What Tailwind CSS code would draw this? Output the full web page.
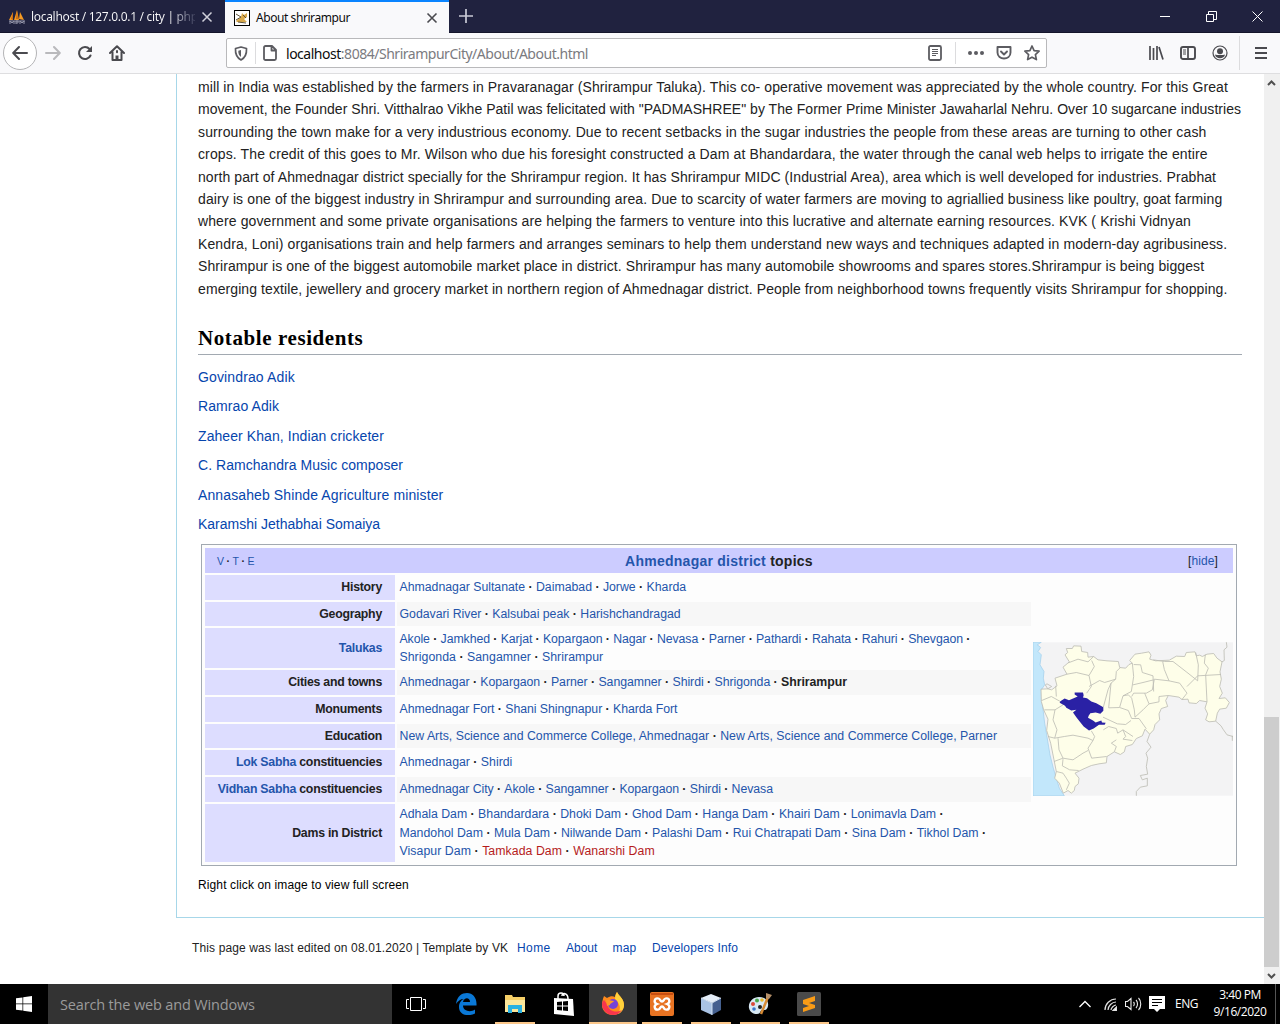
<!DOCTYPE html>
<html lang="en">
<head>
<meta charset="utf-8">
<title>About shrirampur</title>
<script src="https://cdn.jsdelivr.net/npm/@tailwindcss/browser@4"></script>
</head>
<body class="w-[1280px] h-[1024px] overflow-hidden flex flex-col bg-white font-['Liberation_Sans',sans-serif] text-[#222]">

<!-- Tab strip -->
<header class="h-[33px] shrink-0 flex bg-[#20223f] border-b border-[#14152b] font-['Noto_Sans',sans-serif] text-[12px]">
  <div class="w-[225px] flex items-center pl-[9px] text-[#f9f9fa] pt-[2px]">
    <svg class="w-4 h-4 shrink-0" viewBox="0 0 16 16"><path d="M0 11 4 3v8zM5 11 8 1l2 10zM10 10l1-7 4 8z" fill="#f59a23"/><path d="M2 10 4 3v8zM7 10 8 1l1 9z" fill="#c96a10"/><path d="M0 12h16M1 15v-3l2 2 2-2v3M7 15v-3h2v2H7M11 15v-3l2 2 2-2v3" stroke="#9293a8" fill="none"/></svg>
    <span class="ml-[6px] w-[164px] whitespace-nowrap bg-linear-to-r from-[#f9f9fa] from-85% to-[#3a3c58] bg-clip-text text-transparent tracking-[-0.31px]">localhost / 127.0.0.1 / city | php</span>
    <svg class="w-3 h-3 ml-[6px] shrink-0" viewBox="0 0 12 12" stroke="#d0d0da" stroke-width="1.5"><path d="M1.5 1.5l9 9M10.500 1.500l-9 9"/></svg>
  </div>
  <div class="w-[224px] h-[33px] flex items-center bg-[#f9f9fb] border-t-2 border-[#0a84ff] pl-[9px] text-[#0c0c0d]">
    <svg class="w-4 h-4 shrink-0" viewBox="0 0 16 16"><rect x=".5" y=".5" width="15" height="15" fill="#fff" stroke="#000"/><path d="M2 11 7 7 8 3l2 2 3-2v4l-3 2 3 3H3z" fill="#d9a94b"/><path d="M2 4l5 3-5 3M9 5l3 3M4 12l8 1" stroke="#5d5137" fill="none"/></svg>
    <span class="ml-[6px] w-[165px] tracking-[-0.43px]">About shrirampur</span>
    <svg class="w-3 h-3 ml-[5px] shrink-0" viewBox="0 0 12 12" stroke="#4a4a4f" stroke-width="1.6"><path d="M1.500 1.500l9 9M10.500 1.500l-9 9"/></svg>
  </div>
  <svg class="w-[14px] h-[14px] mt-[9px] ml-[10px]" viewBox="0 0 14 14" stroke="#c9cad6" stroke-width="1.7"><path d="M7 0v14M0 7h14"/></svg>
  <div class="ml-auto flex items-center gap-[35px] pr-[17px]">
    <svg class="w-[11px] h-[11px]" viewBox="0 0 11 11" stroke="#fff"><path d="M0 5.500h10"/></svg>
    <svg class="w-[11px] h-[11px]" viewBox="0 0 11 11" fill="none" stroke="#fff"><path d="M.5 3.500h7v7h-7zM2.500 3V.5h8v8H8"/></svg>
    <svg class="w-[11px] h-[11px]" viewBox="0 0 11 11" stroke="#fff"><path d="M.5.5l10 10M10.500.5l-10 10"/></svg>
  </div>
</header>

<!-- Navigation bar -->
<nav class="h-[41px] shrink-0 flex items-center bg-[#f9f9fb] border-b border-[#dedee0] text-[#4a4a4f]">
  <div class="ml-[3px] w-[34px] h-[34px] rounded-full border border-[#b4b4b6] bg-white flex items-center justify-center shrink-0">
    <svg class="w-4 h-4" viewBox="0 0 16 16" fill="none" stroke="currentColor" stroke-width="2" stroke-linecap="round" stroke-linejoin="round"><path d="M15 8H1.500M7 2 1.200 8 7 14"/></svg>
  </div>
  <svg class="w-4 h-4 ml-[8px]" viewBox="0 0 16 16" fill="none" stroke="#b9b9bc" stroke-width="2" stroke-linecap="round" stroke-linejoin="round"><path d="M1 8h13.500M9 2l5.800 6L9 14"/></svg>
  <svg class="w-4 h-4 ml-[16px]" viewBox="0 0 16 16" fill="none" stroke="currentColor" stroke-width="2.100" stroke-linecap="round"><path d="M13.500 10.500a6 6 0 1 1-1-6.500"/><path d="M15 1v6H9z" fill="currentColor" stroke="none"/></svg>
  <svg class="w-4 h-4 ml-[16px]" viewBox="0 0 16 16" fill="none" stroke="currentColor" stroke-width="2" stroke-linejoin="round" stroke-linecap="round"><path d="M1 8l7-6.800L15 8M3.500 7v8h9V7"/><path d="M6.500 15v-4.500h3V15z" fill="currentColor" stroke="none"/><path d="M8 6v1.200"/></svg>
  <div class="ml-[101px] w-[821px] h-[30px] border border-[#b9b9bb] rounded-[2px] bg-white flex items-center pl-[7px] shrink-0 text-[#5c5c61]">
    <svg class="w-[14px] h-[15px] shrink-0" viewBox="0 0 14 15" fill="none" stroke="currentColor" stroke-width="1.700"><path d="M7 1 12.500 2.500c.3 5-1 9-5.500 11.500C2.500 11.500 1.200 7.500 1.500 2.500z" stroke-linejoin="round"/><path d="M7 4v7c-2-1.500-2.800-3.500-2.700-6.300z" fill="currentColor" stroke="none"/></svg>
    <div class="w-px h-[22px] bg-[#dcdcde] ml-[7px]"></div>
    <svg class="w-[14px] h-4 ml-[7px] shrink-0" viewBox="0 0 14 16" fill="none" stroke="currentColor" stroke-width="1.800" stroke-linejoin="round"><path d="M3 1h6l4 4v8.500a1.500 1.500 0 0 1-1.500 1.500h-9A1.500 1.500 0 0 1 1 13.500v-11A1.500 1.500 0 0 1 2.500 1zM8.500 1v4.500H13"/></svg>
    <span class="ml-[9px] w-[636px] font-['Noto_Sans',sans-serif] text-[14px] tracking-[-0.48px] text-[#7b7b80] whitespace-nowrap mt-[1px]"><span class="text-[#0c0c0d]">localhost</span>:8084/ShrirampurCity/About/About.html</span>
    <svg class="w-[14px] h-4 ml-[6px] shrink-0" viewBox="0 0 14 16" fill="none" stroke="currentColor"><rect x="1" y="1" width="12" height="14" rx="1.500" stroke-width="1.800"/><path d="M4 4.500h6M4 6.500h6M4 8.500h6M4 10.500h4"/></svg>
    <div class="w-px h-[22px] bg-[#dcdcde] ml-[13px]"></div>
    <svg class="w-4 h-4 ml-[12px] shrink-0" viewBox="0 0 16 16" fill="currentColor"><circle cx="2" cy="8" r="2"/><circle cx="8" cy="8" r="2"/><circle cx="14" cy="8" r="2"/></svg>
    <svg class="w-4 h-4 ml-[12px] shrink-0" viewBox="0 0 16 16" fill="none" stroke="currentColor" stroke-width="1.900" stroke-linecap="round" stroke-linejoin="round"><path d="M1.500 2h13v5.500c0 8-13 8-13 0zM5 6.500l3 3 3-3"/></svg>
    <svg class="w-4 h-4 ml-[12px] shrink-0" viewBox="0 0 16 16" fill="none" stroke="currentColor" stroke-width="1.700" stroke-linejoin="round"><path d="M8 1l2.100 4.600 5 .6-3.700 3.400 1 5L8 12.200l-4.400 2.400 1-5L.9 6.200l5-.6z"/></svg>
  </div>
  <svg class="w-4 h-4 ml-[101px] shrink-0" viewBox="0 0 16 16" stroke="currentColor" stroke-width="1.700"><path d="M2 1v14M5.500 3v12M9 1v14M11 2l4 12.500"/></svg>
  <svg class="w-4 h-4 ml-[16px] shrink-0" viewBox="0 0 16 16" fill="none" stroke="currentColor"><rect x="1" y="2" width="14" height="12" rx="2" stroke-width="1.900"/><path d="M8 2v12" stroke-width="1.700"/><path d="M3 5h3M3 7h3M3 9h3"/></svg>
  <svg class="w-4 h-4 ml-[16px] shrink-0" viewBox="0 0 16 16" fill="none" stroke="currentColor"><circle cx="8" cy="8" r="7" stroke-width="1.200"/><circle cx="8" cy="6.200" r="3" fill="currentColor" stroke="none"/><path d="M3 9.500c2 .8 8 .8 10 0-.5 5-9.500 5-10 0z" fill="currentColor" stroke="none"/></svg>
  <div class="w-px h-[34px] bg-[#dcdcde] ml-[11px]"></div>
  <svg class="w-[12px] h-[14px] ml-[15px] shrink-0" viewBox="0 0 12 14" stroke="currentColor" stroke-width="1.900"><path d="M0 2h12M0 7h12M0 12h12"/></svg>
</nav>

<!-- Page viewport -->
<div class="h-[910px] shrink-0 flex">
  <div class="w-[1264px] [&_a]:text-[#0645ad]">
    <main class="ml-[176px] h-[844px] border-l border-b border-[#a7d7e9] pl-[21px] pr-[22px] pt-[2px]">
      <div class="text-[14px] leading-[22.4px] whitespace-nowrap h-[225px]">
        <p class="tracking-[0.089px]">mill in India was established by the farmers in Pravaranagar (Shrirampur Taluka). This co- operative movement was appreciated by the whole country. For this Great</p>
        <p class="tracking-[0.034px]">movement, the Founder Shri. Vitthalrao Vikhe Patil was felicitated with "PADMASHREE" by The Former Prime Minister Jawaharlal Nehru. Over 10 sugarcane industries</p>
        <p class="tracking-[0.129px]">surrounding the town make for a very industrious economy. Due to recent setbacks in the sugar industries the people from these areas are turning to other cash</p>
        <p class="tracking-[0.115px]">crops. The credit of this goes to Mr. Wilson who due his foresight constructed a Dam at Bhandardara, the water through the canal web helps to irrigate the entire</p>
        <p class="tracking-[0.082px]">north part of Ahmednagar district specially for the Shrirampur region. It has Shrirampur MIDC (Industrial Area), area which is well developed for industries. Prabhat</p>
        <p class="tracking-[0.111px]">dairy is one of the biggest industry in Shrirampur and surrounding area. Due to scarcity of water farmers are moving to agriallied business like poultry, goat farming</p>
        <p class="tracking-[0.111px]">where government and some private organisations are helping the farmers to venture into this lucrative and alternate earning resources. KVK ( Krishi Vidnyan</p>
        <p class="tracking-[0.112px]">Kendra, Loni) organisations train and help farmers and arranges seminars to help them understand new ways and techniques adapted in modern-day agribusiness.</p>
        <p class="tracking-[0.085px]">Shrirampur is one of the biggest automobile market place in district. Shrirampur has many automobile showrooms and spares stores.Shrirampur is being biggest</p>
        <p class="tracking-[0.095px]">emerging textile, jewellery and grocery market in northern region of Ahmednagar district. People from neighborhood towns frequently visits Shrirampur for shopping.</p>
      </div>
      <h3 class="mt-[24px] h-[30px] border-b border-[#a2a9b1] font-['Liberation_Serif',serif] font-bold text-[21px] leading-[26px] tracking-[0.590px] text-black">Notable residents</h3>
      <div class="mt-[11px] flex flex-col text-[14px] leading-[22.400px] gap-[7px] tracking-[0.080px]">
        <a class="tracking-[0.130px]">Govindrao Adik</a><a>Ramrao Adik</a><a>Zaheer Khan, Indian cricketer</a><a class="tracking-[0.040px]">C. Ramchandra Music composer</a><a class="tracking-[0.110px]">Annasaheb Shinde Agriculture minister</a><a class="tracking-[0px]">Karamshi Jethabhai Somaiya</a>
      </div>

      <section class="ml-[3px] mt-[9px] w-[1036px] h-[322px] border border-[#a2a9b1] bg-[#fdfdfd] p-[3px] text-[12.300px] [&_a]:text-[#2455ab]">
        <div class="h-[25px] bg-[#ccccff] flex items-center justify-between px-3">
          <div class="w-[120px] text-[10.500px] pt-[2px] whitespace-nowrap"><a>V</a><b class="mx-[2.500px]">·</b><a>T</a><b class="mx-[2.500px]">·</b><a>E</a></div>
          <h4 class="font-bold text-[14px] tracking-[0.250px] text-[#222] pt-[1px]"><a>Ahmednagar district</a> topics</h4>
          <div class="w-[120px] text-right pr-[3px] text-[12px] tracking-[0.100px]">[<a>hide</a>]</div>
        </div>
        <div class="mt-[2px] flex">
          <div class="w-[190px] grid gap-y-[2px] grid-rows-[25px_24px_40px_25px_25px_24px_25px_25px_58px] font-bold text-right [&>div]:bg-[#ddddff] [&>div]:pr-[13px] [&>div]:pb-[1px] [&>div]:flex [&>div]:items-center [&>div]:justify-end [&>div]:whitespace-pre text-[12.300px] tracking-[-0.240px]">
            <div>History</div><div>Geography</div><div><a>Talukas</a></div><div>Cities and towns</div><div>Monuments</div><div>Education</div><div><a>Lok Sabha</a> constituencies</div><div><a>Vidhan Sabha</a> constituencies</div><div>Dams in District</div>
          </div>
          <div class="ml-[2px] w-[634px] grid gap-y-[2px] grid-rows-[25px_24px_40px_25px_25px_24px_25px_25px_58px] [&>div]:pl-[2.500px] [&>div]:pb-[1px] [&>div]:flex [&>div]:flex-col [&>div]:justify-center [&>div:nth-child(even)]:bg-[#f7f7f7] whitespace-nowrap leading-[18.500px]">
            <div><p class="tracking-[-0.010px]"><a>Ahmadnagar Sultanate</a><b> · </b><a>Daimabad</a><b> · </b><a>Jorwe</a><b> · </b><a>Kharda</a></p></div>
            <div><p class="tracking-[-0.010px]"><a>Godavari River</a><b> · </b><a>Kalsubai peak</a><b> · </b><a>Harishchandragad</a></p></div>
            <div class="pt-[1px]"><p class="tracking-[-0.080px]"><a>Akole</a><b> · </b><a>Jamkhed</a><b> · </b><a>Karjat</a><b> · </b><a>Kopargaon</a><b> · </b><a>Nagar</a><b> · </b><a>Nevasa</a><b> · </b><a>Parner</a><b> · </b><a>Pathardi</a><b> · </b><a>Rahata</a><b> · </b><a>Rahuri</a><b> · </b><a>Shevgaon</a><b> · </b></p><p class="tracking-[0.040px]"><a>Shrigonda</a><b> · </b><a>Sangamner</a><b> · </b><a>Shrirampur</a></p></div>
            <div><p class="tracking-[-0.040px]"><a>Ahmednagar</a><b> · </b><a>Kopargaon</a><b> · </b><a>Parner</a><b> · </b><a>Sangamner</a><b> · </b><a>Shirdi</a><b> · </b><a>Shrigonda</a><b> · </b><b>Shrirampur</b></p></div>
            <div><p class="tracking-[-0.050px]"><a>Ahmednagar Fort</a><b> · </b><a>Shani Shingnapur</a><b> · </b><a>Kharda Fort</a></p></div>
            <div><p class="tracking-[0.015px]"><a>New Arts, Science and Commerce College, Ahmednagar</a><b> · </b><a>New Arts, Science and Commerce College, Parner</a></p></div>
            <div><p><a>Ahmednagar</a><b> · </b><a>Shirdi</a></p></div>
            <div><p class="tracking-[-0.060px]"><a>Ahmednagar City</a><b> · </b><a>Akole</a><b> · </b><a>Sangamner</a><b> · </b><a>Kopargaon</a><b> · </b><a>Shirdi</a><b> · </b><a>Nevasa</a></p></div>
            <div><p><a>Adhala Dam</a><b> · </b><a>Bhandardara</a><b> · </b><a>Dhoki Dam</a><b> · </b><a>Ghod Dam</a><b> · </b><a>Hanga Dam</a><b> · </b><a>Khairi Dam</a><b> · </b><a>Lonimavla Dam</a><b> · </b></p><p class="tracking-[0.006px]"><a>Mandohol Dam</a><b> · </b><a>Mula Dam</a><b> · </b><a>Nilwande Dam</a><b> · </b><a>Palashi Dam</a><b> · </b><a>Rui Chatrapati Dam</a><b> · </b><a>Sina Dam</a><b> · </b><a>Tikhol Dam</a><b> · </b></p><p class="tracking-[0.060px]"><a>Visapur Dam</a><b> · </b><span class="text-[#b51c1c]">Tamkada Dam</span><b> · </b><span class="text-[#b51c1c]">Wanarshi Dam</span></p></div>
          </div>
          <svg class="w-[200px] h-[154px] ml-[2px] mt-[67px]" viewBox="40 37 600 461" stroke-linejoin="round">
            <path d="M40 37h600v461H40z" fill="#f3f3f4"/>
            <path d="M40 37h25l-12 8 10 8-8 12 10 10-4 30 12 20-2 20 4 20-10 15 3 40 7 60 6 35 10 60 10 40 18 60 15 23H40z" fill="#c2e7fb" stroke="#9dcbea" stroke-width="2"/>
            <g stroke="#bdbdb5" stroke-width="2.500" fill="none">
              <path fill="#fefee9" d="M140 56 158 56 162 48 184 49 186 65 204 68 205 82 222 80 235 90 262 93 296 95 300 113 318 115 328 104 338 100 330 92 346 73 366 70 388 66 394 76 390 88 408 93 449 91 470 79 495 80 500 68 526 66 530 78 540 76 548 80 562 73 582 71 592 85 607 96 601 126 605 148 600 170 608 190 598 206 617 204 629 218 620 235 600 238 593 250 588 274 568 276 558 270 564 252 556 235 562 216 540 212 530 221 508 219 505 208 487 209 478 202 446 197 438 212 444 230 425 236 418 252 420 270 406 284 402 300 390 313 376 298 368 318 350 326 338 344 318 350 314 366 302 374 284 366 262 380 260 399 238 402 215 407 190 418 166 430 178 445 176 462 166 470 164 482 155 490 145 482 131 490 119 460 105 445 110 425 103 390 93 340 81 302 85 268 72 240 65 215 64 178 84 177 96 180 112 168 106 145 142 133 130 112 149 96 136 75 144 68Z"/>
              <path d="M146 99 175 88 205 96 222 80M142 133 170 128 208 137 215 170 201 190M216 92 224 110 208 137M208 170 240 152 255 158 288 148M302 113 290 125 288 148 274 160 267 234M267 234 300 233 326 242 336 266 358 266M338 100 342 140 335 185 310 198 300 232M342 104 363 105 368 128 400 138 402 185M401 90 434 95 460 95 505 130 534 153M429 95 434 119 448 153 404 148 398 180 380 190 342 190 336 200M448 153 480 160 502 190 487 209M502 170 534 138 604 134M528 68 536 105 534 153M557 74 554 100 566 115 558 135 562 216M402 150 370 158 340 165M310 198 326 195 336 205 344 240 346 262 370 240 388 222 375 190M388 222 418 216 418 200 446 197M358 266 380 297M250 262 293 282 318 284 334 272M267 290 290 296 294 310 310 300 318 320 310 328 338 332M215 303 225 320 220 332 205 355 216 385 261 380M251 300 267 290M105 325 134 320 160 316 205 325 220 332M115 325 118 360 130 385 103 395M130 385 160 390 190 370 205 362M130 388 128 408 150 420 177 422M110 425 130 430 140 445 149 460 140 480M66 212 95 200 122 215M108 168 110 200M74 240 106 240 130 225M106 240 100 270 112 300 105 325 85 320M310 300 340 320M251 232 265 180 274 160M284 366 290 350 275 340 290 330"/>
              <path d="M620 37 622 52 613 60 614 92 607 96M588 274 604 288 610 298 622 315 640 320M638 318v15M390 313 382 335 394 352 379 370 384 385 380 410 384 433 362 437 368 450 383 445 383 468 362 472 350 485 350 498M84 177 77 165 82 162 96 170 84 177"/>
            </g>
            <path d="M165 188 190 188 192 196 190 203 202 205 215 215 230 220 251 232 251 243 242 252 228 248 212 250 207 258 205 264 220 272 228 278 245 272 247 278 258 279 255 285 238 285 222 296 208 302 192 290 180 275 170 262 160 248 170 240 155 242 140 234 136 228 120 219 122 214 135 206 148 211 162 205 174 200 165 194Z" fill="#2a21a5"/>
          </svg>
        </div>
      </section>
      <p class="mt-[10px] text-[12px] leading-[18px] text-black tracking-[0.120px]">Right click on image to view full screen</p>
    </main>
    <footer class="ml-[192px] mt-[20px] flex text-[12px] leading-[20px] whitespace-nowrap">
      <span class="w-[325px] tracking-[0.127px]">This page was last edited on 08.01.2020 | Template by VK</span>
      <a class="w-[49px] tracking-[0.400px]">Home</a><a class="w-[46.500px]">About</a><a class="w-[39.500px] tracking-[0.200px]">map</a><a class="tracking-[0.130px]">Developers Info</a>
    </footer>
  </div>
  <!-- Scrollbar -->
  <div class="w-4 bg-[#f0f0f0] flex flex-col items-center justify-between">
    <svg class="w-4 h-[17px]" viewBox="0 0 16 17" fill="none" stroke="#505050" stroke-width="2"><path d="M4 11l3.500-3.500L11 11"/></svg>
    <div class="w-[15px] h-[250px] bg-[#cdcdcd] mt-auto mr-px"></div>
    <svg class="w-4 h-[17px]" viewBox="0 0 16 17" fill="none" stroke="#505050" stroke-width="2"><path d="M4 7l3.500 3.500L11 7"/></svg>
  </div>
</div>

<!-- Taskbar -->
<footer class="h-[40px] shrink-0 flex bg-black text-white font-['Open_Sans',sans-serif]">
  <div class="w-[48px] flex items-center justify-center"><svg class="w-4 h-4" viewBox="0 0 16 16" fill="#fff"><path d="M0 2.300 6.500 1.400v6.200H0zM7.200 1.200 16 0v7.600H7.200zM0 8.300h6.500v6.300L0 13.700zM7.200 8.300H16V16l-8.800-1.200z"/></svg></div>
  <div class="w-[344px] bg-[#333] flex items-center pl-[12px] pt-[2px] text-[14.500px] tracking-[-0.160px] text-[#9b9b9b] whitespace-nowrap">Search the web and Windows</div>
  <div class="w-[48px] flex items-center justify-center"><svg class="w-5 h-[14px]" viewBox="0 0 20 14" fill="none" stroke="#fff"><path d="M4.500.5h11v13h-11zM3 2.500H.5v9H3M17 2.500h2.500v9H17"/></svg></div>
  <div class="w-[52px] flex items-center justify-center"><svg class="w-[21px] h-[22px]" viewBox="0 0 21 22"><path d="M0 11C1 3 6 0 11 0c6 0 10 5 9.500 12.500H7c0 6 8 7 12 4v4C12 24 3 22 3 14c0-4 2-7 5-8-4 0-6 2-8 5zM7 9h7c0-5-6-5-7 0z" fill="#0a78d6"/></svg></div>
  <div class="w-[46px] flex flex-col items-center pt-[10px]"><svg class="w-[22px] h-[20px]" viewBox="0 0 22 20"><path d="M1 1h7l1 2h12v15H1z" fill="#f5cf67"/><path d="M1 6h20v12H1z" fill="#fce79c"/><path d="M4 19v-8h14v8h-4v-4H8v4z" fill="#29b1e2"/></svg><div class="mt-auto w-[40px] h-[2px] bg-[#fbc78a]"></div></div>
  <div class="w-[51px] flex items-center justify-center"><svg class="w-[22px] h-[24px]" viewBox="0 0 22 24"><path d="M5 7V4c0-4 6-4 6 0M9 4c0-4 6-3 6 3" fill="none" stroke="#fff" stroke-width="1.500"/><path d="M1 6 20 7l1 17L1 22z" fill="#fff"/><path d="M4 10l5-.5v4H4zM10 9.500l5-.5v4.500h-5zM4 14.500h5v4L4 18zM10 14.500h5V19l-5-.5z" fill="#000"/></svg></div>
  <div class="w-[48px] bg-[#373737] flex flex-col items-center pt-[8px]"><svg class="w-[24px] h-[23px]" viewBox="0 0 24 23"><path d="M3 4l3 2c3-2 6-2 8-1 0-2 1-4 2-5 2 4 7 7 7 13 0 6-5 10-11 10S1 19 1 13c0-4 1-6 2-9z" fill="#ff8a1d"/><path d="M16 0c2 4 7 7 7 13 0 4-3 8-6 9 4-7 1-11-3-15 0-3 1-5 2-7z" fill="#ffd23c"/><path d="M1 12c0 6 5 11 11 11 4 0 7-2 9-5-6 3-13 2-15-6L3 8c-1 1-2 2-2 4z" fill="#f9364d"/><circle cx="12" cy="12" r="5" fill="#7542d6"/><path d="M5 8c3-1 5 1 8 1-1 2-4 2-4 4L6 14z" fill="#ff9926"/></svg><div class="mt-auto w-[48px] h-[2px] bg-[#fbc78a]"></div></div>
  <div class="w-[49px] flex flex-col items-center pt-[8px]"><svg class="w-[24px] h-[24px]" viewBox="0 0 24 24"><rect width="24" height="24" rx="2" fill="#e87322"/><rect x="1" y="1" width="22" height="2" fill="#c94e10"/><path d="M8.500 6.500c-4-1-5.500 4-1.500 5.500-4 1.500-2.500 6.500 1.500 5.500 2-.5 1.500-3 3.500-3s1.500 2.500 3.500 3c4 1 5.500-4 1.500-5.500 4-1.500 2.500-6.500-1.500-5.500-2 .5-1.500 3-3.500 3s-1.500-2.500-3.500-3z" fill="none" stroke="#fff" stroke-width="2.300"/></svg><div class="mt-auto w-[40px] h-[2px] bg-[#fbc78a]"></div></div>
  <div class="w-[49px] flex flex-col items-center pt-[9px]"><svg class="w-[22px] h-[23px]" viewBox="0 0 22 23"><path d="M1 5 11 1l10 4-9 5z" fill="#e4edf7"/><path d="M1 5l11 5v12L1 17z" fill="#a9c3e4"/><path d="M12 10l9-5v12l-9 5z" fill="#45608f"/><path d="M1 5l11 5 9-5M12 10v12" stroke="#d2e0f0" fill="none"/></svg><div class="mt-auto w-[40px] h-[2px] bg-[#fbc78a]"></div></div>
  <div class="w-[49px] flex flex-col items-center pt-[8px]"><svg class="w-[24px] h-[24px]" viewBox="0 0 24 24"><path d="M1 16C0 10 5 5 11 5s10 4 9 9-4 4-6 4-1 4-5 4-7-2-8-6z" fill="#d7e8f3"/><circle cx="5" cy="12" r="2" fill="#d84a3a"/><circle cx="9" cy="8.500" r="2" fill="#48a84c"/><circle cx="14" cy="8" r="1.800" fill="#e8b82c"/><circle cx="12" cy="15" r="2" fill="#222"/><circle cx="6" cy="17" r="1.800" fill="#3b77ca"/><path d="M13 22 20 5" stroke="#d78b35" stroke-width="2.500"/><path d="M18 1l6 2-3 4-3-1z" fill="#b58f68"/></svg><div class="mt-auto w-[40px] h-[2px] bg-[#fbc78a]"></div></div>
  <div class="w-[49px] flex flex-col items-center pt-[8px]"><svg class="w-[24px] h-[24px]" viewBox="0 0 24 24"><rect width="24" height="24" rx="1.500" fill="#4a4a4a"/><path d="M6 8 18 4v5l-6 2 6 2v3L6 20v-4l6-2-6-2z" fill="#f99b16"/></svg><div class="mt-auto w-[40px] h-[2px] bg-[#fbc78a]"></div></div>
  <div class="ml-auto flex items-center text-[12px] pr-[4px]">
    <svg class="w-[12px] h-[8px]" viewBox="0 0 12 8" fill="none" stroke="#fff" stroke-width="1.300"><path d="M.5 7 6 1.500 11.500 7"/></svg>
    <svg class="w-[13px] h-[13px] ml-[13px]" viewBox="0 0 13 13" fill="none" stroke="#e0e0e0" stroke-width="1.200"><path d="M1 12C1 6 6 1 12 1M4 12c0-4 4-8 8-8M7 12c0-2 3-5 5-5"/><path d="M9 12.500 12.500 9v3.500z" fill="#fff"/></svg>
    <svg class="w-[17px] h-[14px] ml-[8px]" viewBox="0 0 17 14" fill="none" stroke="#eee" stroke-width="1.100"><path d="M.5 4.500h2L6 1.500v11l-3.500-3h-2zM8.500 5c1 1 1 3 0 4M11 3c2 2 2 6 0 8M13.500 1c3 3 3 9 0 12"/></svg>
    <svg class="w-4 h-4 ml-[7px]" viewBox="0 0 16 16"><path d="M0 0h16v13h-5l-3 3-3-3H0z" fill="#fff"/><path d="M3 3.500h10M3 6.500h10M3 9.500h6" stroke="#000"/></svg>
    <span class="ml-[10px] w-[24px] text-[12px] tracking-[-0.500px]">ENG</span>
    <div class="w-[60px] ml-[11px] text-center leading-[17px] tracking-[-0.450px] whitespace-nowrap -mt-[2px]">3:40 PM<br>9/16/2020</div>
    <div class="w-px h-[40px] bg-[#555] ml-[5px]"></div>
  </div>
</footer>
</body>
</html>
